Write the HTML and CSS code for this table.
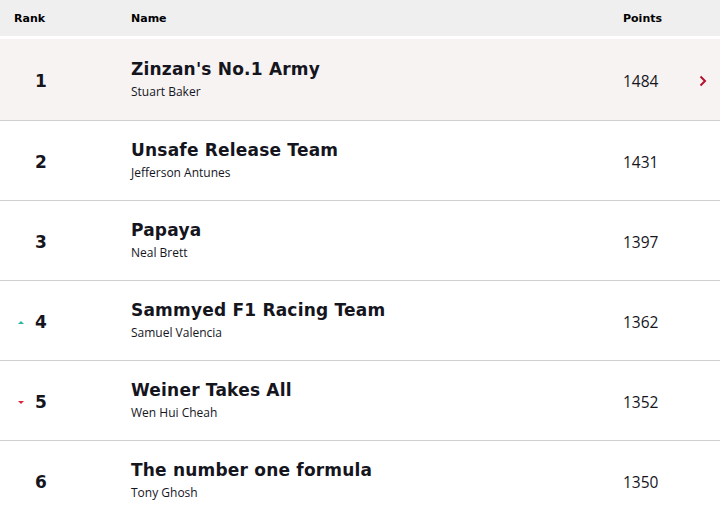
FILE: index.html
```html
<!DOCTYPE html>
<html lang="en">

<head>
    <meta charset="UTF-8">
    <title>League standings</title>
    <link rel="stylesheet" href="styles.css">
</head>

<body>
    <section class="standings">
        <header class="head">
            <span class="head-rank">Rank</span>
            <span class="head-name">Name</span>
            <span class="head-points">Points</span>
            <span></span>
        </header>

        <article class="row active">
            <div class="rank">1</div>
            <div class="team">
                <h2>Zinzan's No.1 Army</h2>
                <span class="player">Stuart Baker</span>
            </div>
            <div class="points">1484</div>
            <div class="more">
                <svg width="8" height="12" viewBox="0 0 8 12"><path d="M1.5 1.5 L6 6 L1.5 10.5" fill="none" stroke="#b5112b" stroke-width="2"/></svg>
            </div>
        </article>

        <article class="row">
            <div class="rank">2</div>
            <div class="team">
                <h2>Unsafe Release Team</h2>
                <span class="player">Jefferson Antunes</span>
            </div>
            <div class="points">1431</div>
            <div class="more"></div>
        </article>

        <article class="row">
            <div class="rank">3</div>
            <div class="team">
                <h2>Papaya</h2>
                <span class="player">Neal Brett</span>
            </div>
            <div class="points">1397</div>
            <div class="more"></div>
        </article>

        <article class="row">
            <div class="rank"><span class="move up"></span>4</div>
            <div class="team">
                <h2>Sammyed F1 Racing Team</h2>
                <span class="player">Samuel Valencia</span>
            </div>
            <div class="points">1362</div>
            <div class="more"></div>
        </article>

        <article class="row">
            <div class="rank"><span class="move down"></span>5</div>
            <div class="team">
                <h2>Weiner Takes All</h2>
                <span class="player">Wen Hui Cheah</span>
            </div>
            <div class="points">1352</div>
            <div class="more"></div>
        </article>

        <article class="row">
            <div class="rank">6</div>
            <div class="team">
                <h2>The number one formula</h2>
                <span class="player">Tony Ghosh</span>
            </div>
            <div class="points">1350</div>
            <div class="more"></div>
        </article>
    </section>
</body>

</html>
```

FILE: styles.css
```css
body {
    margin: 0;
    background-color: white;
    color: #15151e;
    font-family: "Open Sans", sans-serif;
}

.head,
.row {
    display: grid;
    grid-template-columns: 131px 1fr 62px 35px;
    align-items: center;
    box-sizing: border-box;
}

.head {
    height: 36px;
    background-color: #efefef;
    margin-bottom: 3px;
    font-family: "DejaVu Sans", sans-serif;
    font-weight: bold;
    font-size: 11px;
    color: #000;
}

.head-rank {
    padding-left: 14px;
}

.row {
    height: 80px;
    border-bottom: 1px solid #d0d0d0;
}

.row.active {
    height: 82px;
    background-color: #f7f3f2;
}

.rank {
    position: relative;
    width: 82px;
    text-align: center;
    font-family: "DejaVu Sans", sans-serif;
    font-weight: bold;
    font-size: 17px;
    padding-top: 2px;
}

.move {
    position: absolute;
    left: 18px;
    top: 11px;
    width: 0;
    height: 0;
    border-left: 3px solid transparent;
    border-right: 3px solid transparent;
}

.move.up {
    border-bottom: 3px solid #2bb5a0;
}

.move.down {
    border-top: 3px solid #d8283c;
}

.team h2 {
    margin: 0;
    line-height: 22px;
    font-family: "DejaVu Sans", sans-serif;
    font-size: 17px;
    font-weight: bold;
    letter-spacing: 0.2px;
}

.player {
    display: block;
    margin-top: 3px;
    line-height: 18px;
    font-size: 12px;
}

.points {
    font-size: 15.5px;
    padding-top: 2px;
}

.more {
    padding-left: 14px;
    padding-top: 2px;
}
```
